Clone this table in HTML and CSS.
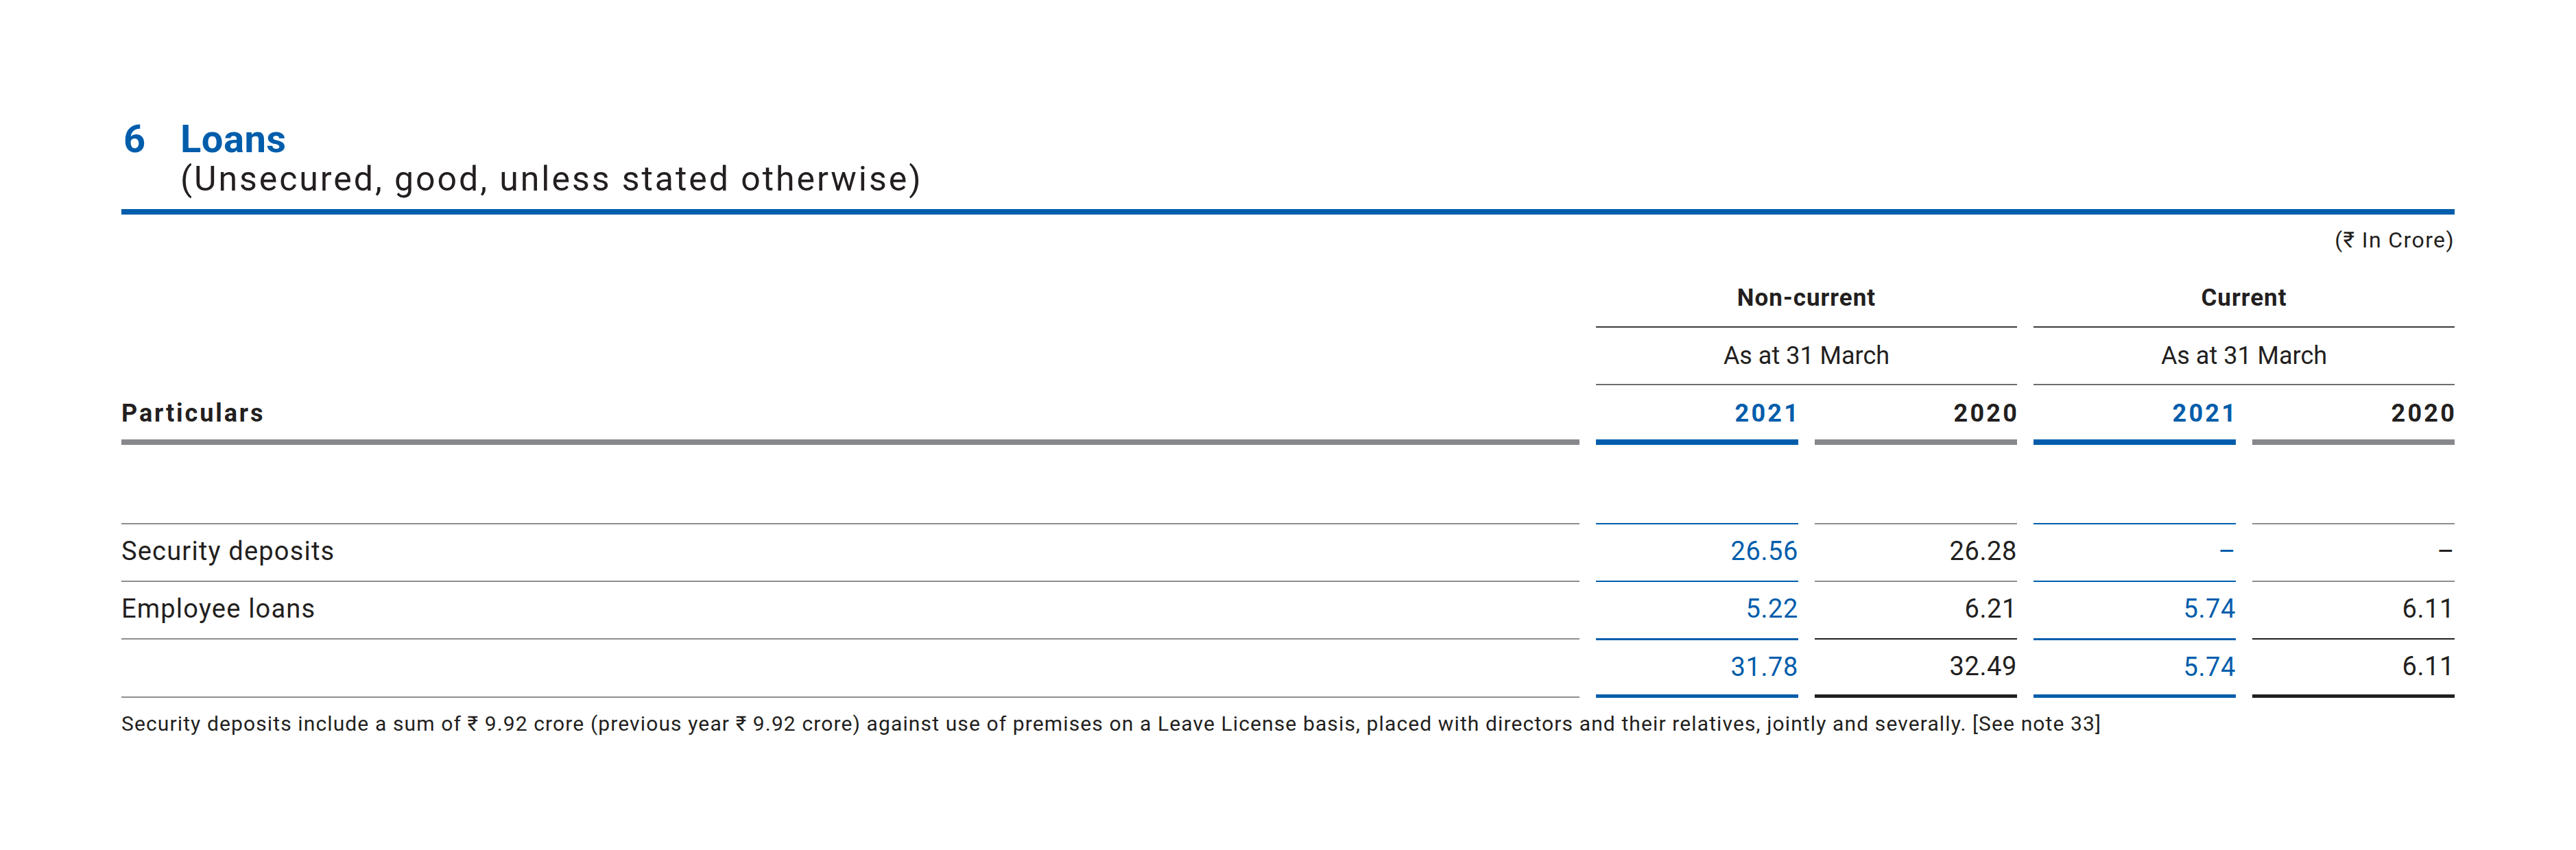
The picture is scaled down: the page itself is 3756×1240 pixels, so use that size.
FILE: index.html
```html
<!DOCTYPE html>
<html lang="en">
<head>
<meta charset="utf-8">
<title>6 Loans</title>
<link rel="stylesheet" href="styles.css">
</head>
<body>
<div class="page">
  <header class="note-head">
    <div class="note-num">6</div>
    <div class="note-titles">
      <h1 class="note-title">Loans</h1>
      <p class="note-sub">(Unsecured, good, unless stated otherwise)</p>
    </div>
  </header>
  <div class="rule"></div>
  <p class="unit">(₹ In Crore)</p>

  <div class="table">
    <div class="blank"></div>
    <div class="grp span2">Non-current</div>
    <div class="grp span2">Current</div>

    <div class="blank"></div>
    <div class="asat span2">As at 31 March</div>
    <div class="asat span2">As at 31 March</div>

    <div class="colhead part">Particulars</div>
    <div class="colhead num cur"><span class="yr">2021</span></div>
    <div class="colhead num"><span class="yr">2020</span></div>
    <div class="colhead num cur"><span class="yr">2021</span></div>
    <div class="colhead num"><span class="yr">2020</span></div>

    <div class="spacer"></div>

    <div class="cell part">Security deposits</div>
    <div class="cell num cur">26.56</div>
    <div class="cell num">26.28</div>
    <div class="cell num cur">–</div>
    <div class="cell num">–</div>

    <div class="cell part">Employee loans</div>
    <div class="cell num cur">5.22</div>
    <div class="cell num">6.21</div>
    <div class="cell num cur">5.74</div>
    <div class="cell num">6.11</div>

    <div class="cell part total"></div>
    <div class="cell num cur total">31.78</div>
    <div class="cell num prev total">32.49</div>
    <div class="cell num cur total">5.74</div>
    <div class="cell num prev total">6.11</div>
  </div>

  <p class="footnote">Security deposits include a sum of ₹ 9.92 crore (previous year ₹ 9.92 crore) against use of premises on a Leave License basis, placed with directors and their relatives, jointly and severally. [See note 33]</p>
</div>
</body>
</html>
```

FILE: styles.css
```css
* {
  box-sizing: border-box;
  margin: 0;
}

body {
  margin: 0;
  background: #ffffff;
  font-family: Roboto, "Noto Sans", "DejaVu Sans", sans-serif;
  color: #231f20;
}

.page {
  width: 3756px;
  padding: 175px 0 0 177px;
}

.note-head {
  display: flex;
}

.note-num {
  width: 86px;
  padding-left: 3px;
  font-size: 56px;
  line-height: 56px;
  font-weight: 700;
  color: #005dab;
}

.note-title {
  font-size: 56px;
  line-height: 56px;
  font-weight: 700;
  color: #005dab;
  letter-spacing: 0.5px;
}

.note-sub {
  font-size: 50px;
  line-height: 61px;
  font-weight: 400;
  letter-spacing: 2.95px;
}

.rule {
  width: 3402px;
  height: 8px;
  margin-top: 13px;
  background: #005dab;
}

.unit {
  width: 3402px;
  margin-top: 17px;
  text-align: right;
  font-size: 32px;
  line-height: 40px;
  letter-spacing: 1.4px;
}

.table {
  display: grid;
  grid-template-columns: 2126px repeat(4, 295px);
  column-gap: 24px;
  width: 3402px;
}

.span2 {
  grid-column: span 2;
}

.grp {
  padding: 45px 0 21px;
  border-bottom: 2px solid #3c3c3c;
  text-align: center;
  font-size: 35px;
  line-height: 40px;
  font-weight: 700;
  letter-spacing: 1px;
}

.asat {
  padding: 21px 0 21px;
  border-bottom: 2px solid #6d6d6d;
  text-align: center;
  font-size: 36px;
  line-height: 40px;
}

.colhead {
  padding: 21px 0 18px;
  border-bottom: 8px solid #87888c;
  font-size: 36px;
  line-height: 40px;
  font-weight: 700;
  letter-spacing: 2.9px;
}

.colhead.num {
  letter-spacing: 3.2px;
}

.yr {
  margin-right: -3px;
}

.colhead.cur {
  color: #005dab;
  border-bottom-color: #005dab;
}

.num {
  text-align: right;
}

.spacer {
  grid-column: 1 / -1;
  height: 114px;
}

.cell {
  height: 84px;
  padding: 19px 0 0;
  border-top: 2px solid #8e8e8e;
  font-size: 38px;
  line-height: 40px;
  letter-spacing: 1.2px;
  align-self: start;
}

.cell.num {
  letter-spacing: 0.6px;
}

.cell.cur {
  color: #005dab;
  border-top-color: #005dab;
}

.cell.total {
  height: 87px;
  border-bottom: 2px solid #8e8e8e;
}

.cell.prev.total {
  border-top-color: #231f20;
  border-bottom: 5px solid #231f20;
}

.cell.cur.total {
  border-top-width: 3px;
  border-bottom: 5px solid #005dab;
}

.footnote {
  margin-top: 20px;
  font-size: 30px;
  line-height: 36px;
  letter-spacing: 1.12px;
}
```
